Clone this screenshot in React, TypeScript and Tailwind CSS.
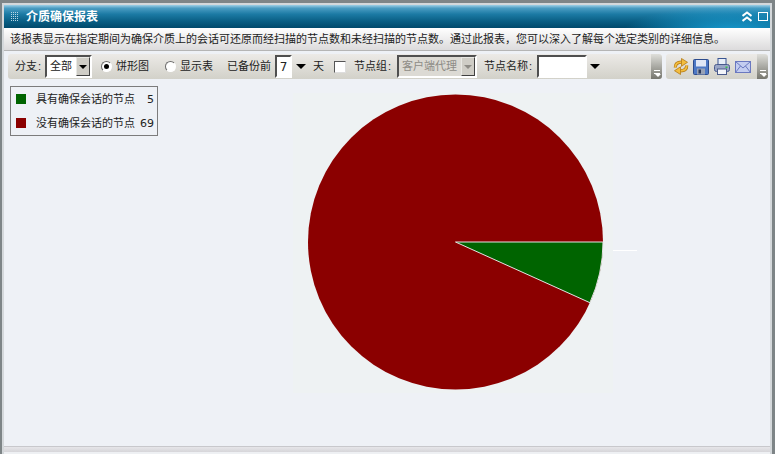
const cjk = "font-['Liberation_Sans','Noto_Sans_CJK_SC',sans-serif]";

function Grip() {
  return (
    <div className="relative w-[11px] self-stretch rounded-tr-[3px] bg-gradient-to-b from-[#dfdfdb] to-[#77776f]">
      <div className="absolute left-[3px] bottom-[8px] h-px w-[6px] bg-white" />
      <div className="absolute left-[3px] bottom-[5px] h-px w-[6px] bg-white" />
      <div className="absolute left-[4px] bottom-[2px] h-0 w-0 border-x-[3px] border-t-[3px] border-x-transparent border-t-white" />
    </div>
  );
}

function Arrow({ className = "" }: { className?: string }) {
  return <div className={`h-0 w-0 border-x-[5px] border-t-[5px] border-x-transparent border-t-black ${className}`} />;
}

function Label({ text, className = "" }: { text: string; className?: string }) {
  return (
    <span className={`flex shrink-0 ${className}`}>
      {text}
      <span className="w-[7px] pl-px">:</span>
    </span>
  );
}

function Select({ text, width, disabled }: { text: string; width: string; disabled?: boolean }) {
  return (
    <div className={`flex h-[23px] shrink-0 items-center border-2 border-t-[#4f4f4f] border-l-[#4f4f4f] border-r-white border-b-white ${width} ${disabled ? "bg-[#dcdad4] text-[#8e8c86]" : "bg-white"}`}>
      <span className="flex-1 pl-[3px] text-[11px]">{text}</span>
      <div className="flex h-[19px] w-[14px] items-center justify-center border border-t-[#e8e8e4] border-l-[#e8e8e4] border-r-[#404040] border-b-[#404040] bg-[#cfcdc6]">
        <div className={`h-0 w-0 border-x-[4px] border-t-[4px] border-x-transparent ${disabled ? "border-t-[#8e8c86]" : "border-t-black"}`} />
      </div>
    </div>
  );
}

function Radio({ checked, className = "" }: { checked?: boolean; className?: string }) {
  return (
    <div className={`flex h-[11px] w-[11px] shrink-0 items-center justify-center rounded-full border border-[#6b6b6b] border-r-white border-b-white bg-white ${className}`}>
      {checked && <div className="h-[5px] w-[5px] rounded-full bg-black" />}
    </div>
  );
}

function ToolIcons() {
  return (
    <div className="flex flex-1 items-center">
      <svg width="16" height="17" viewBox="0 0 16 17" className="ml-[7px]">
        <path d="M2.3 9.5 C2.3 6 4.5 4.2 8.5 4.2" fill="none" stroke="#b47a14" strokeWidth="3.2" />
        <path d="M2.3 9.5 C2.3 6 4.5 4.2 8.5 4.2" fill="none" stroke="#f3bd3e" strokeWidth="1.8" />
        <path d="M8.5 0.5 L14.5 4.3 L8.5 8.3 Z" fill="#f3bd3e" stroke="#b47a14" strokeWidth="0.8" />
        <path d="M13.7 7.5 C13.7 11 11.5 12.8 7.5 12.8" fill="none" stroke="#b47a14" strokeWidth="3.2" />
        <path d="M13.7 7.5 C13.7 11 11.5 12.8 7.5 12.8" fill="none" stroke="#f3bd3e" strokeWidth="1.8" />
        <path d="M7.5 8.8 L1.5 12.7 L7.5 16.5 Z" fill="#f3bd3e" stroke="#b47a14" strokeWidth="0.8" />
      </svg>
      <svg width="16" height="16" viewBox="0 0 16 16" className="ml-[4px]">
        <rect x="0.5" y="0.5" width="15" height="15" rx="1" fill="#4d78c4" stroke="#2c4a8c" />
        <rect x="3" y="1" width="10" height="6.5" fill="#dfe6f5" />
        <rect x="4" y="9.5" width="8" height="6" fill="#98a2b6" />
        <rect x="5.5" y="10.5" width="2.5" height="4" fill="#2c3a5c" />
      </svg>
      <svg width="16" height="17" viewBox="0 0 16 17" className="ml-[5px]">
        <rect x="4" y="0.5" width="8" height="7" fill="#e8eef8" stroke="#3a5592" />
        <rect x="0.5" y="6.5" width="15" height="7" rx="2" fill="#9aa6c6" stroke="#4a5b8c" />
        <rect x="11.5" y="8.5" width="2" height="1.5" fill="#35c24a" />
        <rect x="3.5" y="11" width="9" height="5.5" fill="#f3f5fa" stroke="#4a5b8c" />
      </svg>
      <svg width="16" height="12" viewBox="0 0 16 12" className="ml-[5px]">
        <rect x="0.5" y="0.5" width="15" height="11" fill="#c3cdf0" stroke="#6a78c0" />
        <path d="M0.5 0.5 L8 7 L15.5 0.5 M0.5 11.5 L5.5 5 M15.5 11.5 L10.5 5" fill="none" stroke="#6a78c0" />
      </svg>
    </div>
  );
}

export default function App() {
  return (
    <div className={`flex h-[454px] w-[775px] flex-col overflow-hidden bg-[#7e8587] pl-[2px] pr-[3px] pt-[3px] text-[11px] leading-none text-[#222] ${cjk}`}>
      <div className="flex flex-1 flex-col border-x-2 border-t-2 border-[#d4d8db] bg-[#eef1f6]">
        {/* title bar */}
        <div className="flex h-[23px] shrink-0 items-center bg-[linear-gradient(to_bottom,#9fd0e6_0%,#4a9cc2_14%,#1b7aa4_40%,#0a5f85_70%,#014a6c_100%)] text-white">
          <div className="ml-[7px] grid h-[9px] w-[7px] grid-cols-4 gap-px">
            {Array.from({ length: 20 }).map((_, i) => (
              <div key={i} className="h-px w-px bg-[#b9d6e4]" />
            ))}
          </div>
          <span className="ml-[8px] text-[12px] font-bold">介质确保报表</span>
          <div className="ml-auto flex h-full w-[150px] items-center justify-end gap-[6px] bg-[radial-gradient(ellipse_at_75%_130%,#1ba8e0_0%,#1ba8e000_70%)] pr-[2px]">
            <svg width="10" height="11" viewBox="0 0 10 11" fill="none" stroke="white" strokeWidth="2">
              <path d="M0.5 5 L5 1.5 L9.5 5 M0.5 10 L5 6.5 L9.5 10" />
            </svg>
            <div className="h-[9px] w-[10px] border-[1.5px] border-white" />
          </div>
        </div>
        {/* description */}
        <div className="flex h-[23px] shrink-0 items-center border-b border-[#b5b5b5] bg-gradient-to-b from-white to-[#dcdbdc] pl-[6px] text-[11px]">
          {"该报表显示在指定期间为确保介质上的会话可还原而经扫描的节点数和未经扫描的节点数。通过此报表\uFF0C您可以深入了解每个选定类别的详细信息。"}
        </div>
        {/* toolbars */}
        <div className="mt-[3px] flex h-[25px] shrink-0 gap-[4px] pl-[4px]">
          <div className="flex w-[654px] items-center overflow-hidden rounded-[3px] bg-gradient-to-b from-[#eceae7] to-[#d2d1c9]">
            <Label text="分支" className="ml-[7px] w-[30px]" />
            <Select text="全部" width="w-[47px]" />
            <Radio checked className="ml-[9px]" />
            <span className="ml-[4px]">饼形图</span>
            <Radio className="ml-[16px]" />
            <span className="ml-[4px]">显示表</span>
            <span className="ml-[14px]">已备份前</span>
            <div className="ml-[4px] flex h-[23px] w-[17px] shrink-0 items-center justify-center border-2 border-t-[#4f4f4f] border-l-[#4f4f4f] border-r-white border-b-white bg-white font-['DejaVu_Sans'] text-[12px]">7</div>
            <Arrow className="ml-[4px]" />
            <span className="ml-[7px]">天</span>
            <div className="ml-[10px] h-[12px] w-[12px] shrink-0 border border-[#555] border-r-[#ddd] border-b-[#ddd] bg-white" />
            <Label text="节点组" className="ml-[8px]" />
            <Select text="客户端代理" width="ml-[3px] w-[80px]" disabled />
            <Label text="节点名称" className="ml-[7px]" />
            <div className="ml-[2px] h-[23px] w-[50px] shrink-0 border-2 border-t-[#4f4f4f] border-l-[#4f4f4f] border-r-white border-b-white bg-white" />
            <Arrow className="ml-[3px]" />
            <div className="flex-1" />
            <Grip />
          </div>
          <div className="flex w-[102px] items-center overflow-hidden rounded-[3px] bg-gradient-to-b from-[#eceae7] to-[#d2d1c9]">
            <ToolIcons />
            <Grip />
          </div>
        </div>
        {/* chart area */}
        <div className="flex flex-1">
          <div className="ml-[6px] mt-[7px] h-[50px] w-[148px] shrink-0 border border-[#7c7c7c]">
            <div className="flex h-[24px] items-center pl-[5px] pr-[3px]">
              <div className="h-[10px] w-[10px] bg-[#006400]" />
              <span className="ml-[10px] flex-1">具有确保会话的节点</span>
              <span className="font-['DejaVu_Sans'] text-[11px]">5</span>
            </div>
            <div className="flex h-[24px] items-center pl-[5px] pr-[3px]">
              <div className="h-[10px] w-[10px] bg-[#8b0000]" />
              <span className="ml-[10px] flex-1">没有确保会话的节点</span>
              <span className="font-['DejaVu_Sans'] text-[11px]">69</span>
            </div>
          </div>
          <svg width="345" height="300" viewBox="0 0 345 300" className="ml-[135px] mt-[14px] shrink-0">
            <rect x="0" y="0" width="320" height="300" fill="#eef2f3" />
            <circle cx="162.5" cy="149" r="147.5" fill="#8b0000" />
            <path d="M162.5 149 L310 149 A147.5 147.5 0 0 1 296.9 209.7 Z" fill="#006400" stroke="#e4e4e4" strokeWidth="1" />
            <line x1="320" y1="157.5" x2="344" y2="157.5" stroke="white" />
          </svg>
        </div>
        {/* bottom bar */}
        <div className="h-[6px] shrink-0 border-t border-[#c8c8cc] bg-gradient-to-b from-[#e6e6e9] to-[#d6d5d9]" />
        <div className="h-[2px] shrink-0 bg-[#eef0f3]" />
      </div>
    </div>
  );
}
